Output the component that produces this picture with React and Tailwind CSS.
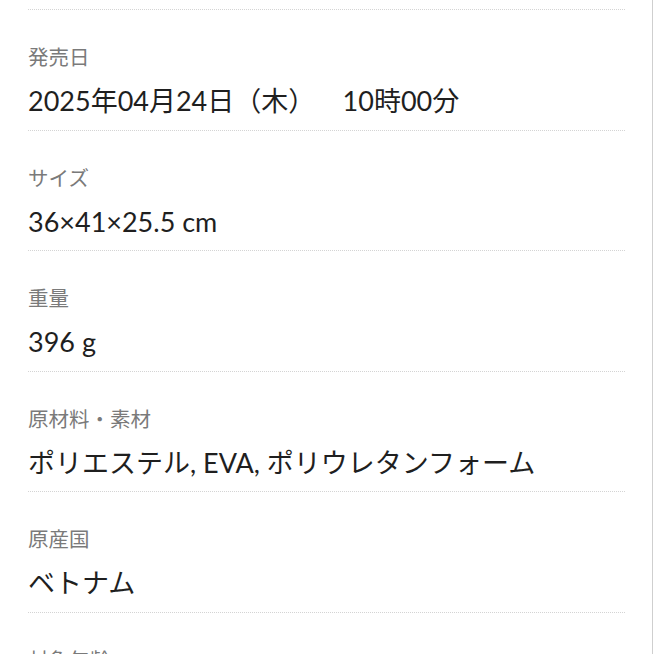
import React from 'react';

const specs = [
  { label: '発売日', value: '2025年04月24日（木）　\u00A0\u00A010時00分' },
  { label: 'サイズ', value: '36×41×25.5 cm' },
  { label: '重量', value: '396 g' },
  { label: '原材料・素材', value: 'ポリエステル, EVA, ポリウレタンフォーム' },
  { label: '原産国', value: 'ベトナム' },
  { label: '対象年齢', value: '3歳以上' },
];

const font = { fontFamily: 'Lato, "Noto Sans CJK JP", sans-serif' };

export default function App() {
  return (
    <div className="w-[653px] h-[654px] overflow-hidden bg-white border-r border-[#cfcfcf]" style={font}>
      <div className="pl-[28px] pr-[27px]">
        <div className="h-[10px] border-b border-dotted border-[#d4d4d4]" />
        {specs.map((item) => (
          <div key={item.label} className="pt-[33px] pb-[10.5px] border-b border-dotted border-[#d4d4d4]">
            <p className="text-[20.5px] leading-[28px] text-[#7a7a7a]">{item.label}</p>
            <p className="mt-[12px] text-[27px] leading-[36px] text-[#1f1f1f]">{item.value}</p>
          </div>
        ))}
      </div>
    </div>
  );
}
